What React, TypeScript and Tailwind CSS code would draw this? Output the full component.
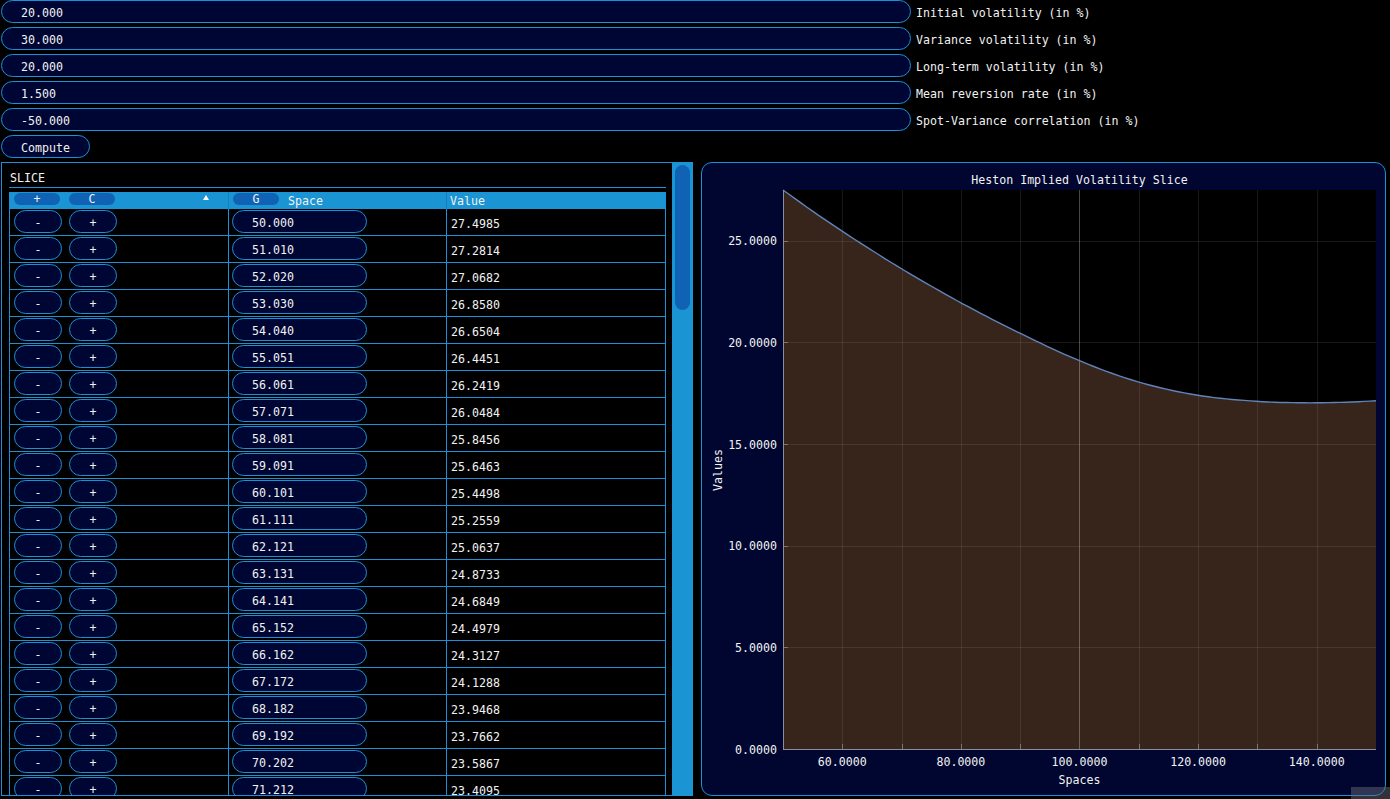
import React from 'react';

const params = [
  { value: '20.000', label: 'Initial volatility (in %)' },
  { value: '30.000', label: 'Variance volatility (in %)' },
  { value: '20.000', label: 'Long-term volatility (in %)' },
  { value: '1.500', label: 'Mean reversion rate (in %)' },
  { value: '-50.000', label: 'Spot-Variance correlation (in %)' },
];

const rows: [string, string][] = [
  ['50.000', '27.4985'], ['51.010', '27.2814'], ['52.020', '27.0682'], ['53.030', '26.8580'],
  ['54.040', '26.6504'], ['55.051', '26.4451'], ['56.061', '26.2419'], ['57.071', '26.0484'],
  ['58.081', '25.8456'], ['59.091', '25.6463'], ['60.101', '25.4498'], ['61.111', '25.2559'],
  ['62.121', '25.0637'], ['63.131', '24.8733'], ['64.141', '24.6849'], ['65.152', '24.4979'],
  ['66.162', '24.3127'], ['67.172', '24.1288'], ['68.182', '23.9468'], ['69.192', '23.7662'],
  ['70.202', '23.5867'], ['71.212', '23.4095'],
];

// knots read off the plot, smoothed with cubic hermite
const knots: [number, number][] = [
  [50, 27.4985], [55.051, 26.4451], [60.101, 25.4498], [65.152, 24.4979], [70.202, 23.5867],
  [80, 21.95], [90, 20.45], [100, 19.1], [110, 18.05], [120, 17.4], [130, 17.1],
  [138, 17.03], [145, 17.06], [150, 17.13],
];

function slope(i: number): number {
  const n = knots.length;
  if (i === 0) return (knots[1][1] - knots[0][1]) / (knots[1][0] - knots[0][0]);
  if (i === n - 1) return (knots[n - 1][1] - knots[n - 2][1]) / (knots[n - 1][0] - knots[n - 2][0]);
  return (knots[i + 1][1] - knots[i - 1][1]) / (knots[i + 1][0] - knots[i - 1][0]);
}

function interp(x: number): number {
  let i = 0;
  while (i < knots.length - 2 && x > knots[i + 1][0]) i++;
  const [x0, y0] = knots[i];
  const [x1, y1] = knots[i + 1];
  const h = x1 - x0;
  const t = (x - x0) / h;
  const t2 = t * t;
  const t3 = t2 * t;
  return (2 * t3 - 3 * t2 + 1) * y0 + (t3 - 2 * t2 + t) * h * slope(i) + (-2 * t3 + 3 * t2) * y1 + (t3 - t2) * h * slope(i + 1);
}

const L = 81;
const R = 674;
const T = 4;
const B = 563;
const X = (v: number) => L + ((v - 50) / 100) * (R - L);
const Y = (v: number) => B - (v / 27.4985) * (B - T);

const Chart: React.FC = () => {
  const pts: string[] = [];
  for (let i = 0; i < 100; i++) {
    const x = 50 + (i * 100) / 99;
    pts.push(`${X(x).toFixed(2)},${Y(interp(x)).toFixed(2)}`);
  }
  const line = 'M' + pts.join(' L');
  const area = `${line} L${R},${B} L${L},${B} Z`;
  const xGrid = [60, 70, 80, 90, 110, 120, 130, 140];
  const xLabels = [60, 80, 100, 120, 140];
  const yTicks = [5, 10, 15, 20, 25];

  return (
    <svg width={683} height={609} className="block">
      <rect x={L} y={T} width={R - L} height={B - T} fill="#000000" />
      <path d={area} fill="#37241a" />
      {xGrid.map((v) => (
        <line key={v} x1={Math.round(X(v)) + 0.5} x2={Math.round(X(v)) + 0.5} y1={T} y2={B} stroke="#ffffff" strokeOpacity={0.09} />
      ))}
      {yTicks.map((v) => (
        <line key={v} x1={L} x2={R} y1={Math.round(Y(v)) + 0.5} y2={Math.round(Y(v)) + 0.5} stroke="#ffffff" strokeOpacity={0.09} />
      ))}
      <line x1={377.5} x2={377.5} y1={T} y2={B} stroke="#ffffff" strokeOpacity={0.28} />
      {xGrid.map((v) => (
        <line key={v} x1={Math.round(X(v)) + 0.5} x2={Math.round(X(v)) + 0.5} y1={B - 5} y2={B} stroke="#ffffff" strokeOpacity={0.3} />
      ))}
      {yTicks.map((v) => (
        <line key={v} x1={L} x2={L + 5} y1={Math.round(Y(v)) + 0.5} y2={Math.round(Y(v)) + 0.5} stroke="#ffffff" strokeOpacity={0.3} />
      ))}
      <path d={line} fill="none" stroke="#5f84bc" strokeWidth={1.4} />
      <line x1={L + 0.5} x2={L + 0.5} y1={T} y2={B + 1} stroke="#8a8f9f" />
      <line x1={L} x2={R} y1={B + 0.5} y2={B + 0.5} stroke="#8a8f9f" />
      {[0, ...yTicks].map((v) => (
        <text key={v} x={L - 6} y={Y(v) + 0.5} textAnchor="end" dominantBaseline="central" fill="#f2f2f2" fontSize="11.6">
          {v.toFixed(4)}
        </text>
      ))}
      {xLabels.map((v) => (
        <text key={v} x={X(v)} y={576} textAnchor="middle" dominantBaseline="central" fill="#f2f2f2" fontSize="11.6">
          {v.toFixed(4)}
        </text>
      ))}
      <text x={377.5} y={594} textAnchor="middle" dominantBaseline="central" fill="#f2f2f2" fontSize="11.6">
        Spaces
      </text>
      <text x={16} y={284} textAnchor="middle" dominantBaseline="central" fill="#f2f2f2" fontSize="11.6" transform="rotate(-90 16 284)">
        Values
      </text>
    </svg>
  );
};

const App: React.FC = () => {
  return (
    <div className="relative w-[1390px] h-[799px] overflow-hidden bg-black text-[#f2f2f2] text-[11.6px] leading-[13px] font-['DejaVu_Sans_Mono',monospace]">
      <div className="flex flex-col gap-[4px] pl-px">
        {params.map((p) => (
          <div key={p.label} className="flex items-center h-[23px]">
            <div className="w-[910px] h-[23px] rounded-full border border-[#1b8fd8] bg-[#000633] pl-[19px] pt-[3px] flex items-center">
              {p.value}
            </div>
            <span className="ml-[5px] pt-[3px]">{p.label}</span>
          </div>
        ))}
        <div className="w-[89px] h-[23px] rounded-full border border-[#1b8fd8] bg-[#000633] pt-[3px] flex items-center justify-center">
          Compute
        </div>
      </div>

      <div className="flex gap-[8px] pl-px mt-[4px]">
        {/* table panel */}
        <div className="flex w-[692px] h-[634px]">
          <div className="flex-1 border-l border-t border-b border-[#1b8fd8] pl-[7px] pt-[8px] overflow-hidden">
            <div className="h-[13px] pl-px pt-px">SLICE</div>
            <div className="mt-[3px] h-px w-[657px] bg-[#1b8fd8]" />
            <div className="mt-[4px] w-[657px] border-l border-r border-[#1b8fd8]">
              <div className="flex h-[17px] bg-[#1a94d2]">
                <div className="relative w-[219px] border-r border-[#1480bd] pl-[4px] pt-px flex gap-[9px]">
                  <div className="w-[46px] h-[12px] rounded-full bg-[#1062b5] pt-px flex items-center justify-center">+</div>
                  <div className="w-[46px] h-[12px] rounded-full bg-[#1062b5] pt-px flex items-center justify-center">C</div>
                  <div className="absolute left-[193px] top-[3px] w-0 h-0 border-x-[3px] border-x-transparent border-b-[5px] border-b-white" />
                </div>
                <div className="w-[218px] border-r border-[#1480bd] pl-[4px] pt-px flex">
                  <div className="w-[46px] h-[12px] rounded-full bg-[#1062b5] pt-px flex items-center justify-center">G</div>
                  <span className="ml-[9px] pt-px leading-[15px]">Space</span>
                </div>
                <div className="w-[218px] pl-[3px] pt-[2px] flex items-center">Value</div>
              </div>
              {rows.map(([space, value]) => (
                <div key={space} className="flex h-[27px] border-b border-[#1b8fd8]">
                  <div className="w-[219px] border-r border-[#1b8fd8] pl-[4px] pt-px flex gap-[7px]">
                    <div className="w-[48px] h-[23px] rounded-full border border-[#1b8fd8] bg-[#000633] pt-[3px] flex items-center justify-center">-</div>
                    <div className="w-[48px] h-[23px] rounded-full border border-[#1b8fd8] bg-[#000633] pt-[3px] flex items-center justify-center">+</div>
                  </div>
                  <div className="w-[218px] border-r border-[#1b8fd8] pl-[3px] pt-px">
                    <div className="w-[135px] h-[23px] rounded-full border border-[#1b8fd8] bg-[#000633] pl-[19px] pt-[4px] flex items-center">
                      {space}
                    </div>
                  </div>
                  <div className="w-[218px] pl-[4px] pt-[4px] flex items-center">{value}</div>
                </div>
              ))}
            </div>
          </div>
          <div className="w-[21px] bg-[#1a94d2] pt-[3px] px-[3px]">
            <div className="h-[145px] rounded-full bg-[#1062b5]" />
          </div>
        </div>

        {/* chart panel */}
        <div className="w-[685px] h-[634px] rounded-[11px] border border-[#1b8fd8] bg-[#00062f] flex flex-col">
          <div className="pt-[11px] h-[23px] ml-[81px] w-[593px] text-center">Heston Implied Volatility Slice</div>
          <Chart />
        </div>
      </div>

      <div className="absolute right-0 bottom-0 w-[39px] h-[12px] bg-[rgba(110,110,125,0.45)]" />
    </div>
  );
};

export default App;
